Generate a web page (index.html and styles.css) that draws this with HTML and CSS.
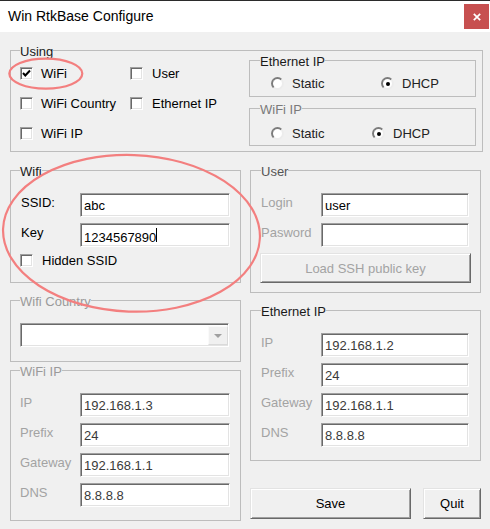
FILE: index.html
```html
<!DOCTYPE html>
<html lang="en">
<head>
<meta charset="utf-8">
<title>Win RtkBase Configure</title>
<link rel="stylesheet" href="styles.css">
</head>
<body>
<div class="window">
  <div class="titlebar">
    <span class="title">Win RtkBase Configure</span>
    <span class="close"><svg width="8" height="8" viewBox="0 0 8 8"><path d="M0.8 0.8 L7.2 7.2 M7.2 0.8 L0.8 7.2" stroke="#fff" stroke-width="1.7" fill="none"/></svg></span>
  </div>
  <div class="client">
    <fieldset class="grp using">
      <legend>Using</legend>
      <div class="using-body">
        <div class="checks">
          <div class="chk"><span class="box"><svg width="11" height="11" viewBox="0 0 11 11"><path d="M2 5 L4.3 7.5 L9 2.5" stroke="#000" stroke-width="2" fill="none"/></svg></span>WiFi</div>
          <div class="chk col2"><span class="box"></span>User</div>
          <div class="chk"><span class="box"></span>WiFi Country</div>
          <div class="chk col2"><span class="box"></span>Ethernet IP</div>
          <div class="chk"><span class="box"></span>WiFi IP</div>
        </div>
        <div class="modes">
          <fieldset class="grp mode eth-mode">
            <legend>Ethernet IP</legend>
            <div class="radios">
              <div class="opt"><span class="radio"></span>Static</div>
              <div class="opt"><span class="radio on"></span>DHCP</div>
            </div>
          </fieldset>
          <fieldset class="grp mode wifi-mode">
            <legend class="dim">WiFi IP</legend>
            <div class="radios">
              <div class="opt"><span class="radio"></span>Static</div>
              <div class="opt"><span class="radio on"></span>DHCP</div>
            </div>
          </fieldset>
        </div>
      </div>
    </fieldset>

    <div class="cols">
      <div class="col">
        <fieldset class="grp wifi">
          <legend>Wifi</legend>
          <div class="form">
            <div class="row"><span class="lbl">SSID:</span><div class="field">abc</div></div>
            <div class="row"><span class="lbl">Key</span><div class="field">1234567890<span class="caret"></span></div></div>
            <div class="hidden-row"><span class="box"></span>Hidden SSID</div>
          </div>
        </fieldset>
        <fieldset class="grp country">
          <legend class="off">Wifi Country</legend>
          <div class="combo"><span class="drop"><span class="arrow"></span></span></div>
        </fieldset>
        <fieldset class="grp wifiip">
          <legend class="off">WiFi IP</legend>
          <div class="form">
            <div class="row"><span class="lbl off">IP</span><div class="field val">192.168.1.3</div></div>
            <div class="row"><span class="lbl off">Prefix</span><div class="field val">24</div></div>
            <div class="row"><span class="lbl off">Gateway</span><div class="field val">192.168.1.1</div></div>
            <div class="row"><span class="lbl off">DNS</span><div class="field val">8.8.8.8</div></div>
          </div>
        </fieldset>
      </div>
      <div class="col">
        <fieldset class="grp user">
          <legend class="mid">User</legend>
          <div class="form">
            <div class="row"><span class="lbl off">Login</span><div class="field">user</div></div>
            <div class="row"><span class="lbl off">Pasword</span><div class="field"></div></div>
            <button class="btn loadbtn" disabled>Load SSH public key</button>
          </div>
        </fieldset>
        <fieldset class="grp ethip">
          <legend>Ethernet IP</legend>
          <div class="form">
            <div class="row"><span class="lbl off">IP</span><div class="field val">192.168.1.2</div></div>
            <div class="row"><span class="lbl off">Prefix</span><div class="field val">24</div></div>
            <div class="row"><span class="lbl off">Gateway</span><div class="field val">192.168.1.1</div></div>
            <div class="row"><span class="lbl off">DNS</span><div class="field val">8.8.8.8</div></div>
          </div>
        </fieldset>
        <div class="buttons">
          <button class="btn save">Save</button>
          <button class="btn quit">Quit</button>
        </div>
      </div>
    </div>
  </div>

  <svg class="marks" width="490" height="529" viewBox="0 0 490 529">
    <ellipse cx="45.8" cy="73.6" rx="36.5" ry="15" fill="none" stroke="#f37f7f" stroke-width="2.2"/>
    <ellipse cx="131.5" cy="233.3" rx="128.5" ry="78.3" fill="none" stroke="#f37f7f" stroke-width="2.2" transform="rotate(2 131.5 233.3)"/>
  </svg>
</div>
</body>
</html>
```

FILE: styles.css
```css
* { box-sizing: border-box; }

body {
  margin: 0;
  font-family: "Liberation Sans", Arial, sans-serif;
  font-size: 13px;
  line-height: 15px;
  color: #000;
  background: #f0f0f0;
}

.window {
  position: relative;
  width: 490px;
  height: 529px;
  background: #f0f0f0;
  overflow: hidden;
}

/* title bar */
.titlebar {
  height: 32px;
  background: #fff;
  border-top: 1px solid #2b2b2b;
  display: flex;
  justify-content: space-between;
  align-items: flex-start;
  padding-left: 8px;
}
.title {
  font-size: 14px;
  line-height: 16px;
  padding-top: 7px;
}
.close {
  width: 25px;
  height: 25px;
  margin-top: 3px;
  margin-right: 1px;
  background: #c75050;
  display: flex;
  align-items: center;
  justify-content: center;
}
.close svg { display: block; }

.client { padding: 10px 0 0 10px; }

/* group boxes */
.grp {
  margin: 0;
  padding: 0;
  border: 1px solid #bdbdbd;
  min-width: 0;
}
.grp > legend {
  padding: 2px 0 0;
  margin-left: 9px;
  line-height: 15px;
  color: #1a1a1a;
}
.grp > legend.dim { color: #7a7a7a; }
.grp > legend.mid { color: #555; }
.grp > legend.off { color: #9a9a9a; }

.using { width: 473px; height: 110px; }
.using-body {
  display: flex;
  padding: 0 6px 0 9px;
}
.checks {
  display: grid;
  grid-template-columns: 110px auto;
  grid-auto-rows: 15px;
  row-gap: 15px;
  padding-top: 7px;
  align-content: start;
}
.chk {
  display: flex;
  align-items: center;
  gap: 8px;
  white-space: nowrap;
}
.chk.col2 { gap: 9px; }

.box {
  width: 13px;
  height: 13px;
  flex: none;
  background: #fff;
  border: 1px solid;
  border-color: #a0a0a0 #fff #fff #a0a0a0;
  box-shadow: inset 1px 1px 0 #696969, inset -1px -1px 0 #e3e3e3;
  display: flex;
  align-items: center;
  justify-content: center;
}
.box svg { display: block; }

.modes {
  margin-left: auto;
  margin-top: -7px;
  width: 227px;
}
.mode > legend { margin-left: 10px; }
.eth-mode { height: 45px; }
.wifi-mode { height: 46px; margin-top: 3px; }
.radios {
  display: flex;
  padding: 7px 0 0 21px;
}
.wifi-mode .radios { padding-top: 9px; }
.opt {
  display: flex;
  align-items: center;
  gap: 8px;
  height: 15px;
  color: #222;
}
.eth-mode .opt:first-child { width: 110px; }
.wifi-mode .opt:first-child { width: 101px; }

.radio {
  position: relative;
  width: 13px;
  height: 13px;
  flex: none;
  border-radius: 50%;
  background: #fff;
  border: 2px solid;
  border-color: #7c7c7c #ececec #ececec #7c7c7c;
}
.radio.on::after {
  content: "";
  position: absolute;
  left: 2.5px;
  top: 2.5px;
  width: 4px;
  height: 4px;
  border-radius: 50%;
  background: #000;
}

/* lower columns */
.cols {
  display: flex;
  gap: 9px;
  margin-top: 10px;
}
.col {
  width: 231px;
  display: flex;
  flex-direction: column;
}
.wifi { height: 121px; }
.user { height: 131px; }
.user > legend, .ethip > legend { margin-left: 10px; }
.country { height: 70px; margin-top: 9px; }
.wifiip { height: 159px; }
.ethip { height: 159px; margin-top: 9px; color: #1a1a1a; }

.form { padding: 14px 0 0 10px; }
.wifiip .form { padding-left: 9px; }

.row {
  display: flex;
  height: 24px;
  margin-bottom: 6px;
}
.lbl {
  width: 59px;
  padding-top: 2px;
  white-space: nowrap;
  flex: none;
}
.lbl.off { color: #a3a3a3; }
.wifiip .lbl, .user .lbl, .ethip .lbl { width: 60px; }

.field {
  width: 150px;
  height: 24px;
  flex: none;
  background: #fff;
  border: 1px solid;
  border-color: #a0a0a0 #fff #fff #a0a0a0;
  box-shadow: inset 1px 1px 0 #696969, inset -1px -1px 0 #e3e3e3;
  padding: 4px 3px 0;
  white-space: nowrap;
  overflow: hidden;
}
.field.val { color: #3a3a3a; }
.user .field, .ethip .field { width: 148px; }

.caret {
  display: inline-block;
  width: 1px;
  height: 14px;
  background: #000;
  vertical-align: baseline;
}

.hidden-row {
  display: flex;
  align-items: center;
  gap: 9px;
  height: 15px;
  margin-top: 2px;
  margin-left: -1px;
}

/* combo */
.combo {
  margin: 14px 0 0 9px;
  width: 209px;
  height: 24px;
  background: #fff;
  border: 1px solid;
  border-color: #a0a0a0 #fff #fff #a0a0a0;
  box-shadow: inset 1px 1px 0 #696969, inset -1px -1px 0 #e3e3e3;
  display: flex;
  justify-content: flex-end;
  align-items: flex-start;
  padding: 2px 0 0 0;
}
.drop {
  width: 20px;
  height: 19px;
  background: #f0f0f0;
  border: 1px solid;
  border-color: #fafafa #dadada #dadada #fafafa;
  display: flex;
  align-items: center;
  justify-content: center;
}
.arrow {
  width: 0;
  height: 0;
  border-left: 4px solid transparent;
  border-right: 4px solid transparent;
  border-top: 4px solid #a0a0a0;
}

/* buttons */
.btn {
  margin: 0;
  padding: 0;
  font: inherit;
  color: #000;
  background: #f0f0f0;
  border: 1px solid;
  border-color: #e3e3e3 #696969 #696969 #e3e3e3;
  box-shadow: inset 1px 1px 0 #fff, inset -1px -1px 0 #a0a0a0;
  display: flex;
  align-items: center;
  justify-content: center;
  border-radius: 0;
}
.btn:disabled { color: #a3a3a3; }
.loadbtn {
  margin-left: -1px;
  width: 211px;
  height: 30px;
}
.buttons {
  display: flex;
  gap: 12px;
  margin-top: 27px;
}
.save { width: 161px; height: 31px; }
.quit { width: 58px; height: 31px; }

/* annotations drawn over the dialog */
.marks {
  position: absolute;
  left: 0;
  top: 0;
  pointer-events: none;
}
```
